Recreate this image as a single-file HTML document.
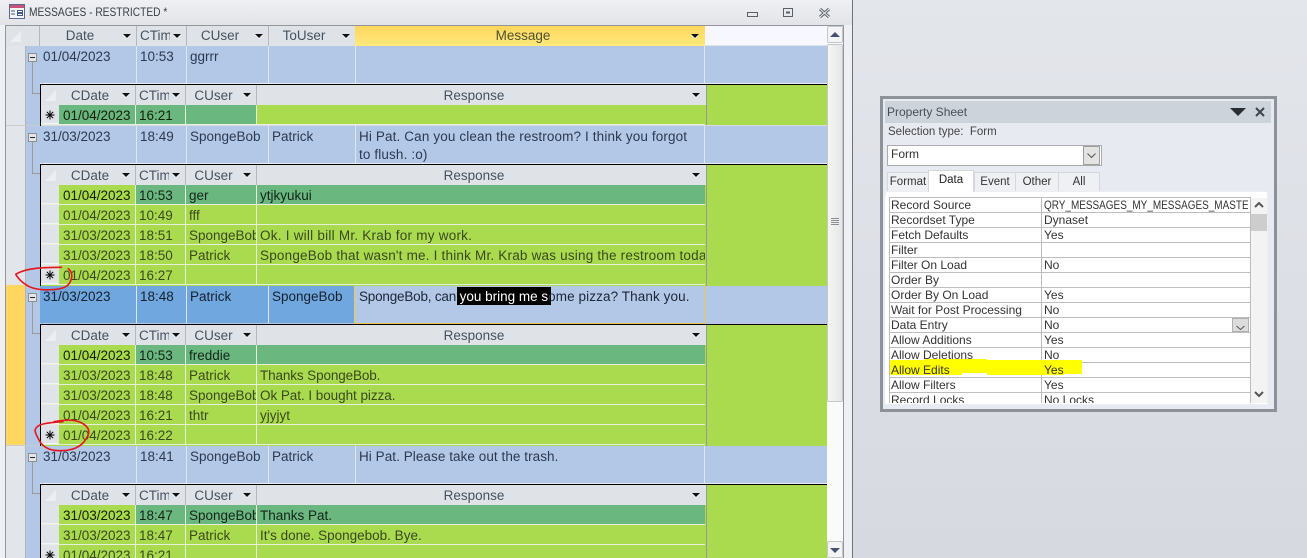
<!DOCTYPE html>
<html><head><meta charset="utf-8"><title>Messages</title>
<style>
html,body{margin:0;padding:0;width:1307px;height:558px;overflow:hidden;background:#dadde4}
body{position:relative;font-family:"Liberation Sans",sans-serif}
div{position:absolute;box-sizing:border-box}
.x{white-space:nowrap;overflow:hidden;font-size:13.5px;line-height:20px;color:#2b3a52}
.hd{background:#dfe2e7;height:20px;top:0}
.h{color:#46525f;text-align:center;top:0;height:20px}
.sb .h{line-height:22px}
.ar{width:0;height:0;border:4px solid transparent;border-top:4px solid #111;border-bottom:0;filter:drop-shadow(0 1px 0 #fff)}
.tri{width:0;height:0;border-style:solid;border-width:0 0 11px 11px;border-color:transparent transparent #eceef2 transparent}
.bc{top:0;height:37px;background:#b3c7e6;padding:0 0 0 3px;line-height:21px;border-right:1px solid #dfe6f0}
.sb{left:40px;width:787px;border-top:1px solid #000;background:#aadb4f}
.sb:before{content:"";position:absolute;left:0;top:-1px;bottom:0;width:1px;background:#000;z-index:3}
.sr{left:0;width:665px;height:20px;background:#e6eedd}
.c{top:0;height:19px;line-height:22px;padding-left:3px;background:#aadb4f;color:#39481f}
.d{padding-left:4px}
.g{background:#6ab77f;color:#14241a}
.k{color:#141f08}
.sep{top:0;width:1px;height:20px;background:#b4b8bd}
.sel{left:1px;top:0;width:18px;height:19px;background:#e0e3e8;border-bottom:1px solid #f3f4f6}
.st{position:absolute;left:4px;top:5px}
.vg{left:666px;top:0;width:1px;bottom:0;background:#999}
.bx{left:28px;width:9px;height:9px;border:1px solid #8f8f8f;background:#e4e6ea}
.bx:after{content:"";position:absolute;left:1px;top:3px;width:5px;height:1px;background:#222}
.vl{left:32px;width:1px;background:#9b9b9b}
.hl{left:32px;width:8px;height:1px;background:#9b9b9b}
.p{left:4px;width:361px;height:15px;border-bottom:1px solid #bdbdbd;font-size:12px;line-height:15px;color:#333;white-space:nowrap}
.p span{position:absolute;left:2px;top:0}
.p b{position:absolute;left:155px;top:0;font-weight:normal;width:204px;overflow:hidden}
.tab{top:172px;height:19px;background:#eef0f3;border:1px solid #d5d7db;border-bottom:0;font-size:11.5px;line-height:18px;text-align:center;color:#333}
</style></head><body>

<!-- right background -->
<div style="left:853px;top:0;width:454px;height:558px;background:linear-gradient(#e3e6eb,#d6d9e0)"></div>

<!-- window -->
<div style="left:0;top:0;width:852px;height:558px;background:#eef0f4"></div>
<div style="left:852px;top:0;width:1px;height:558px;background:#6f7479"></div>
<div style="left:0;top:0;width:852px;height:25px;background:linear-gradient(#eef0f3,#e2e4e8)"></div>
<svg style="position:absolute;left:9px;top:4px" width="16" height="15" viewBox="0 0 16 15"><rect x=".5" y=".5" width="15" height="14" fill="#f4f6fb" stroke="#5a6a8c"/><rect x="1" y="1" width="14" height="3" fill="#c8527a"/><path d="M2 7h4M2 10h4" stroke="#445a80"/><rect x="8.500" y="6.500" width="5" height="2" fill="#fff" stroke="#445a80"/><rect x="8.500" y="9.500" width="5" height="2" fill="#fff" stroke="#445a80"/></svg>
<div class="x" style="left:29px;top:2px;height:20px;font-size:12px;color:#3a3f46;transform:scaleX(.85);transform-origin:0 0">MESSAGES - RESTRICTED *</div>
<svg style="position:absolute;left:745px;top:5px" width="90" height="14" viewBox="0 0 90 14" fill="none"><rect x="2.500" y="7.500" width="10" height="4" stroke="#5a6068"/><rect x="38.500" y="3.500" width="9" height="8" stroke="#5a6068"/><rect x="41" y="6.500" width="4" height="2" fill="#5a6068"/><path d="M75 4l9 8M84 4l-9 8" stroke="#5a6068" stroke-width="3"/><path d="M75 4l9 8M84 4l-9 8" stroke="#eef0f3" stroke-width="1"/></svg>

<!-- grid frame -->
<div style="left:5px;top:25px;width:839px;height:533px;border:1px solid #92979c;border-bottom:0;background:#e0e3e8"></div>
<div style="left:6px;top:26px;width:19px;height:532px;background:#e2e5ea"></div>
<div style="left:25px;top:46px;width:15px;height:512px;background:#b3c7e6;border-left:1px solid #b0b4ba"></div>
<div style="left:6px;top:285px;width:19px;height:160px;background:#ffd65f"></div>
<div style="left:6px;top:125px;width:34px;height:1px;background:#c7ccd3"></div>
<div style="left:6px;top:445px;width:34px;height:1px;background:#c7ccd3"></div>

<!-- main header -->
<div style="left:6px;top:26px;width:821px;height:20px;background:#dfe2e7"></div>
<div class="tri" style="left:10px;top:31px"></div>
<div style="left:39px;top:26px;width:1px;height:20px;background:#b4b8bd"></div>
<div style="left:136px;top:26px;width:1px;height:20px;background:#b4b8bd"></div>
<div style="left:186px;top:26px;width:1px;height:20px;background:#b4b8bd"></div>
<div style="left:268px;top:26px;width:1px;height:20px;background:#b4b8bd"></div>
<div style="left:355px;top:26px;width:350px;height:20px;background:linear-gradient(#ffd55c,#ffe97e)"></div>
<div style="left:705px;top:26px;width:122px;height:19px;background:#f6f7ff"></div>
<div class="x h" style="left:40px;top:26px;width:80px">Date</div>
<div class="x h" style="left:140px;top:26px;width:30px;text-align:left">CTim</div>
<div class="x h" style="left:187px;top:26px;width:66px">CUser</div>
<div class="x h" style="left:269px;top:26px;width:70px">ToUser</div>
<div class="x h" style="left:356px;top:26px;width:334px;color:#4d5232">Message</div>
<div class="ar" style="left:123px;top:34px"></div>
<div class="ar" style="left:173px;top:34px"></div>
<div class="ar" style="left:255px;top:34px"></div>
<div class="ar" style="left:342px;top:34px"></div>
<div class="ar" style="left:691px;top:34px"></div>

<!-- ROW 1 -->
<div style="left:40px;top:46px;width:787px;height:38px;background:#b3c7e6"></div>
<div class="x bc" style="left:40px;top:46px;width:97px">01/04/2023</div>
<div class="x bc" style="left:137px;top:46px;width:50px">10:53</div>
<div class="x bc" style="left:187px;top:46px;width:82px">ggrrr</div>
<div class="x bc" style="left:269px;top:46px;width:87px"></div>
<div class="x bc" style="left:356px;top:46px;width:349px"></div>
<div style="left:40px;top:83px;width:787px;height:1px;background:#e6ecf4"></div>
<div class="bx" style="top:53px"></div><div class="vl" style="top:62px;height:31px"></div><div class="hl" style="top:93px"></div>

<div class="sb" style="top:84px;height:42px">
  <div class="hd" style="left:0;width:666px"></div>
  <div class="vg"></div>
  <div class="tri" style="left:5px;top:5px"></div>
  <div class="sep" style="left:95px"></div><div class="sep" style="left:145px"></div><div class="sep" style="left:216px"></div>
  <div class="x h" style="left:19px;width:76px;padding-right:14px">CDate</div><div class="x h" style="left:99px;width:30px;text-align:left">CTim</div><div class="x h" style="left:146px;width:70px;padding-right:15px">CUser</div><div class="x h" style="left:217px;width:449px;padding-right:15px">Response</div>
  <div class="ar" style="left:82px;top:8px"></div><div class="ar" style="left:132px;top:8px"></div><div class="ar" style="left:203px;top:8px"></div><div class="ar" style="left:652px;top:8px"></div>
  <div class="sr" style="top:20px;height:20px">
    <div class="sel"><svg class="st" width="10" height="10" viewBox="0 0 10 10"><path d="M5 .5v9M.5 5h9M1.800 1.800l6.400 6.400M8.200 1.800l-6.400 6.400" stroke="#000"/></svg></div>
    <div class="x c d g k" style="left:19px;width:76px">01/04/2023</div><div class="x c g k" style="left:96px;width:49px">16:21</div><div class="x c g" style="left:146px;width:70px"></div><div class="x c" style="left:217px;width:448px"></div>
  </div>
</div>
<div style="left:40px;top:125px;width:787px;height:1px;background:#d8dde3"></div>

<!-- ROW 2 -->
<div style="left:40px;top:126px;width:787px;height:38px;background:#b3c7e6"></div>
<div class="x bc" style="left:40px;top:126px;width:97px">31/03/2023</div>
<div class="x bc" style="left:137px;top:126px;width:50px">18:49</div>
<div class="x bc" style="left:187px;top:126px;width:82px">SpongeBob</div>
<div class="x bc" style="left:269px;top:126px;width:87px">Patrick</div>
<div class="x bc" style="left:356px;top:126px;width:349px;line-height:18px;padding-top:2px;letter-spacing:.13px">Hi Pat. Can you clean the restroom? I think you forgot<br>to flush. :o)</div>
<div style="left:40px;top:163px;width:787px;height:1px;background:#e6ecf4"></div>
<div class="bx" style="top:133px"></div><div class="vl" style="top:142px;height:31px"></div><div class="hl" style="top:173px"></div>

<div class="sb" style="top:164px;height:122px">
  <div class="hd" style="left:0;width:666px"></div>
  <div class="vg"></div>
  <div class="tri" style="left:5px;top:5px"></div>
  <div class="sep" style="left:95px"></div><div class="sep" style="left:145px"></div><div class="sep" style="left:216px"></div>
  <div class="x h" style="left:19px;width:76px;padding-right:14px">CDate</div><div class="x h" style="left:99px;width:30px;text-align:left">CTim</div><div class="x h" style="left:146px;width:70px;padding-right:15px">CUser</div><div class="x h" style="left:217px;width:449px;padding-right:15px">Response</div>
  <div class="ar" style="left:82px;top:8px"></div><div class="ar" style="left:132px;top:8px"></div><div class="ar" style="left:203px;top:8px"></div><div class="ar" style="left:652px;top:8px"></div>
  <div class="sr" style="top:20px"><div class="sel"></div><div class="x c d k" style="left:19px;width:76px">01/04/2023</div><div class="x c g" style="left:96px;width:49px">10:53</div><div class="x c g" style="left:146px;width:70px">ger</div><div class="x c g" style="left:217px;width:448px">ytjkyukui</div></div>
  <div class="sr" style="top:40px"><div class="sel"></div><div class="x c d" style="left:19px;width:76px">01/04/2023</div><div class="x c" style="left:96px;width:49px">10:49</div><div class="x c" style="left:146px;width:70px">fff</div><div class="x c" style="left:217px;width:448px"></div></div>
  <div class="sr" style="top:60px"><div class="sel"></div><div class="x c d" style="left:19px;width:76px">31/03/2023</div><div class="x c" style="left:96px;width:49px">18:51</div><div class="x c" style="left:146px;width:70px">SpongeBob</div><div class="x c" style="left:217px;width:448px;letter-spacing:.24px">Ok. I will bill Mr. Krab for my work.</div></div>
  <div class="sr" style="top:80px"><div class="sel"></div><div class="x c d" style="left:19px;width:76px">31/03/2023</div><div class="x c" style="left:96px;width:49px">18:50</div><div class="x c" style="left:146px;width:70px">Patrick</div><div class="x c" style="left:217px;width:448px;letter-spacing:.2px">SpongeBob that wasn't me. I think Mr. Krab was using the restroom today</div></div>
  <div class="sr" style="top:100px"><div class="sel"><svg class="st" width="10" height="10" viewBox="0 0 10 10"><path d="M5 .5v9M.5 5h9M1.800 1.800l6.400 6.400M8.200 1.800l-6.400 6.400" stroke="#000"/></svg></div><div class="x c d" style="left:19px;width:76px">01/04/2023</div><div class="x c" style="left:96px;width:49px">16:27</div><div class="x c" style="left:146px;width:70px"></div><div class="x c" style="left:217px;width:448px"></div></div>
</div>

<!-- ROW 3 -->
<div style="left:40px;top:286px;width:787px;height:38px;background:#b3c7e6"></div>
<div class="x bc" style="left:40px;top:286px;width:97px;background:#71a7df;color:#14202e">31/03/2023</div>
<div class="x bc" style="left:137px;top:286px;width:50px;background:#71a7df;color:#14202e">18:48</div>
<div class="x bc" style="left:187px;top:286px;width:82px;background:#71a7df;color:#14202e">Patrick</div>
<div class="x bc" style="left:269px;top:286px;width:86px;background:#71a7df;color:#14202e">SpongeBob</div>
<div class="bc" style="left:354px;top:286px;width:351px;height:38px;border:1px solid #f0c850;border-width:0 1px 1px 1px"></div>
<div style="left:457px;top:287px;width:94px;height:18px;background:#000"></div>
<div class="x" style="left:359px;top:286px;height:21px;line-height:21px;color:#1c2738;white-space:pre"><span style="letter-spacing:-.2px">SpongeBob, can </span><span style="color:#fff">you bring me s</span><span style="letter-spacing:.1px">ome pizza? Thank you.</span></div>
<div class="bx" style="top:293px"></div><div class="vl" style="top:302px;height:31px"></div><div class="hl" style="top:333px"></div>

<div class="sb" style="top:324px;height:122px">
  <div class="hd" style="left:0;width:666px"></div>
  <div class="vg"></div>
  <div class="tri" style="left:5px;top:5px"></div>
  <div class="sep" style="left:95px"></div><div class="sep" style="left:145px"></div><div class="sep" style="left:216px"></div>
  <div class="x h" style="left:19px;width:76px;padding-right:14px">CDate</div><div class="x h" style="left:99px;width:30px;text-align:left">CTim</div><div class="x h" style="left:146px;width:70px;padding-right:15px">CUser</div><div class="x h" style="left:217px;width:449px;padding-right:15px">Response</div>
  <div class="ar" style="left:82px;top:8px"></div><div class="ar" style="left:132px;top:8px"></div><div class="ar" style="left:203px;top:8px"></div><div class="ar" style="left:652px;top:8px"></div>
  <div class="sr" style="top:20px"><div class="sel"></div><div class="x c d k" style="left:19px;width:76px">01/04/2023</div><div class="x c g" style="left:96px;width:49px">10:53</div><div class="x c g" style="left:146px;width:70px">freddie</div><div class="x c g" style="left:217px;width:448px"></div></div>
  <div class="sr" style="top:40px"><div class="sel"></div><div class="x c d" style="left:19px;width:76px">31/03/2023</div><div class="x c" style="left:96px;width:49px">18:48</div><div class="x c" style="left:146px;width:70px">Patrick</div><div class="x c" style="left:217px;width:448px;letter-spacing:-.12px">Thanks SpongeBob.</div></div>
  <div class="sr" style="top:60px"><div class="sel"></div><div class="x c d" style="left:19px;width:76px">31/03/2023</div><div class="x c" style="left:96px;width:49px">18:48</div><div class="x c" style="left:146px;width:70px">SpongeBob</div><div class="x c" style="left:217px;width:448px;letter-spacing:-.05px">Ok Pat. I bought pizza.</div></div>
  <div class="sr" style="top:80px"><div class="sel"></div><div class="x c d" style="left:19px;width:76px">01/04/2023</div><div class="x c" style="left:96px;width:49px">16:21</div><div class="x c" style="left:146px;width:70px">thtr</div><div class="x c" style="left:217px;width:448px">yjyjyt</div></div>
  <div class="sr" style="top:100px"><div class="sel"><svg class="st" width="10" height="10" viewBox="0 0 10 10"><path d="M5 .5v9M.5 5h9M1.800 1.800l6.400 6.400M8.200 1.800l-6.400 6.400" stroke="#000"/></svg></div><div class="x c d" style="left:19px;width:76px">01/04/2023</div><div class="x c" style="left:96px;width:49px">16:22</div><div class="x c" style="left:146px;width:70px"></div><div class="x c" style="left:217px;width:448px"></div></div>
</div>

<!-- ROW 4 -->
<div style="left:40px;top:446px;width:787px;height:38px;background:#b3c7e6"></div>
<div class="x bc" style="left:40px;top:446px;width:97px">31/03/2023</div>
<div class="x bc" style="left:137px;top:446px;width:50px">18:41</div>
<div class="x bc" style="left:187px;top:446px;width:82px">SpongeBob</div>
<div class="x bc" style="left:269px;top:446px;width:87px">Patrick</div>
<div class="x bc" style="left:356px;top:446px;width:349px;letter-spacing:.06px">Hi Pat. Please take out the trash.</div>
<div style="left:40px;top:483px;width:787px;height:1px;background:#e6ecf4"></div>
<div class="bx" style="top:453px"></div><div class="vl" style="top:462px;height:31px"></div><div class="hl" style="top:493px"></div>

<div class="sb" style="top:484px;height:74px;overflow:hidden">
  <div class="hd" style="left:0;width:666px"></div>
  <div class="vg"></div>
  <div class="tri" style="left:5px;top:5px"></div>
  <div class="sep" style="left:95px"></div><div class="sep" style="left:145px"></div><div class="sep" style="left:216px"></div>
  <div class="x h" style="left:19px;width:76px;padding-right:14px">CDate</div><div class="x h" style="left:99px;width:30px;text-align:left">CTim</div><div class="x h" style="left:146px;width:70px;padding-right:15px">CUser</div><div class="x h" style="left:217px;width:449px;padding-right:15px">Response</div>
  <div class="ar" style="left:82px;top:8px"></div><div class="ar" style="left:132px;top:8px"></div><div class="ar" style="left:203px;top:8px"></div><div class="ar" style="left:652px;top:8px"></div>
  <div class="sr" style="top:20px"><div class="sel"></div><div class="x c d k" style="left:19px;width:76px">31/03/2023</div><div class="x c g" style="left:96px;width:49px">18:47</div><div class="x c g" style="left:146px;width:70px">SpongeBob</div><div class="x c g" style="left:217px;width:448px">Thanks Pat.</div></div>
  <div class="sr" style="top:40px"><div class="sel"></div><div class="x c d" style="left:19px;width:76px">31/03/2023</div><div class="x c" style="left:96px;width:49px">18:47</div><div class="x c" style="left:146px;width:70px">Patrick</div><div class="x c" style="left:217px;width:448px">It's done. Spongebob. Bye.</div></div>
  <div class="sr" style="top:60px"><div class="sel"><svg class="st" width="10" height="10" viewBox="0 0 10 10"><path d="M5 .5v9M.5 5h9M1.800 1.800l6.400 6.400M8.200 1.800l-6.400 6.400" stroke="#000"/></svg></div><div class="x c d" style="left:19px;width:76px">01/04/2023</div><div class="x c" style="left:96px;width:49px">16:21</div><div class="x c" style="left:146px;width:70px"></div><div class="x c" style="left:217px;width:448px"></div></div>
</div>

<!-- scrollbar -->
<div style="left:827px;top:26px;width:16px;height:532px;background:#fafafa"></div>
<div style="left:827px;top:26px;width:16px;height:17px;background:#f4f4f4;border:1px solid #c4c6c9;border-radius:2px"></div>
<div style="left:830px;top:32px;width:0;height:0;border:5px solid transparent;border-bottom:5px solid #47506e;border-top:0"></div>
<div style="left:827px;top:44px;width:16px;height:358px;background:linear-gradient(90deg,#f5f5f5,#e6e6e6);border:1px solid #c4c6c9;border-radius:2px"></div>
<svg style="position:absolute;left:830px;top:218px" width="10" height="8"><path d="M1 .5h8M1 2.500h8M1 4.500h8M1 6.500h8" stroke="#8a8e94"/></svg>
<div style="left:827px;top:541px;width:16px;height:17px;background:#f4f4f4;border:1px solid #c4c6c9;border-radius:2px"></div>
<div style="left:830px;top:548px;width:0;height:0;border:5px solid transparent;border-top:5px solid #47506e;border-bottom:0"></div>

<!-- red scribbles -->
<svg style="position:absolute;left:0;top:0;pointer-events:none;z-index:5" width="110" height="558" viewBox="0 0 110 558" fill="none" stroke="#e8141c" stroke-width="1.600" stroke-linecap="round" stroke-linejoin="round">
<path d="M61.500 267.300C52 267.500 44 267.600 36.500 268.300C29 269 21 271 15.700 274.300C18 278 21 281.500 25 284C30 288 36 289.500 45 289.800C54 290 63 289 67.500 285.500C71 282 72.500 277 71.500 273.500C71 271.500 70 270 68.300 268.700"/>
<path d="M54 421.700C60 420.500 67 419.800 73 420.300C78 421 83 423 86 426C88.500 428.500 89.500 431 88.500 434C87 438 85 441 82 444C78 447.500 73 449.500 67 450.300C60 451 54 450.800 49 449C44 447 41 444 39 440C37 436.500 35 433 35 430C36 427 39 425 43 424C49 422.700 56 422 63 421.700"/>
</svg>

<!-- PROPERTY SHEET -->
<div style="left:880px;top:96px;width:397px;height:316px;background:#e7eaf0;border:3px solid #8d9298"></div>
<div style="left:885px;top:101px;width:386px;height:22px;background:#ccd3db"></div>
<div class="x" style="left:887px;top:102px;font-size:12px;color:#4a4f55">Property Sheet</div>
<div style="left:1230px;top:108px;width:0;height:0;border:8px solid transparent;border-top:8px solid #2a2d31;border-bottom:0"></div>
<svg style="position:absolute;left:1255px;top:107px" width="10" height="10"><path d="M1 1l8 8M9 1l-8 8" stroke="#40454b" stroke-width="2"/></svg>
<div class="x" style="left:888px;top:122px;font-size:11.500px;color:#444;white-space:pre">Selection type:  Form</div>
<div style="left:887px;top:145px;width:215px;height:21px;background:#fff;border:1px solid #a9abae"></div>
<div class="x" style="left:891px;top:144px;font-size:12px;color:#333">Form</div>
<div style="left:1083px;top:146px;width:17px;height:19px;background:#e3e3e3;border:1px solid #9e9e9e"></div>
<svg style="position:absolute;left:1086px;top:152px" width="11" height="8" fill="none"><path d="M1.500 1.500l4 4 4-4" stroke="#555"/></svg>

<div class="tab" style="left:887px;width:42px">Format</div>
<div class="tab" style="left:974px;width:42px">Event</div>
<div class="tab" style="left:1015px;width:44px">Other</div>
<div class="tab" style="left:1058px;width:42px">All</div>
<div style="left:885px;top:191px;width:383px;height:214px;background:#fff;border:1px solid #eceef1"></div>
<div class="tab" style="left:928px;top:170px;width:46px;height:22px;background:#fff;z-index:2;color:#222">Data</div>

<div style="left:885px;top:197px;width:366px;height:206px;overflow:hidden;background:#fff">
  <div style="left:4px;top:0;width:1px;height:206px;background:#bdbdbd"></div>
  <div style="left:156px;top:0;width:1px;height:206px;background:#bdbdbd"></div>
  <div style="left:365px;top:0;width:1px;height:206px;background:#bdbdbd"></div>
  <div style="left:4px;top:0;width:361px;height:1px;background:#bdbdbd"></div>
  <div style="left:197px;top:165px;width:168px;height:1px;background:#bdbdbd"></div>
  <svg style="position:absolute;left:0;top:0" width="200" height="206"><path d="M5 163H40V162H102V163H197V177H179V178H102V176H77V178H5Z" fill="#ffff00"/></svg>
</div>
<div style="left:885px;top:197px;width:366px;height:206px;overflow:hidden">
  <div class="p" style="top:1px"><span>Record Source</span><b><i style="font-style:normal;display:inline-block;transform:scaleX(.83);transform-origin:0 0;width:300px">QRY_MESSAGES_MY_MESSAGES_MASTER</i></b></div>
  <div class="p" style="top:16px"><span>Recordset Type</span><b>Dynaset</b></div>
  <div class="p" style="top:31px"><span>Fetch Defaults</span><b>Yes</b></div>
  <div class="p" style="top:46px"><span>Filter</span><b></b></div>
  <div class="p" style="top:61px"><span>Filter On Load</span><b>No</b></div>
  <div class="p" style="top:76px"><span>Order By</span><b></b></div>
  <div class="p" style="top:91px"><span>Order By On Load</span><b>Yes</b></div>
  <div class="p" style="top:106px"><span>Wait for Post Processing</span><b>No</b></div>
  <div class="p" style="top:121px"><span>Data Entry</span><b>No</b></div>
  <div class="p" style="top:136px"><span>Allow Additions</span><b>Yes</b></div>
  <div class="p" style="top:151px;border-bottom-color:transparent"><span>Allow Deletions</span><b>No</b></div>
  <div class="p" style="top:166px"><span>Allow Edits</span><b>Yes</b></div>
  <div class="p" style="top:181px"><span>Allow Filters</span><b>Yes</b></div>
  <div class="p" style="top:196px"><span>Record Locks</span><b>No Locks</b></div>
</div>
<div style="left:1232px;top:318px;width:17px;height:14px;background:#dcdcdc;border:1px solid #b0b0b0"></div>
<svg style="position:absolute;left:1235px;top:325px" width="11" height="6" fill="none"><path d="M1.500 1l4 3.500 4-3.500" stroke="#555"/></svg>
<div style="left:1251px;top:198px;width:16px;height:205px;background:#f3f3f3"></div>
<svg style="position:absolute;left:1254px;top:201px" width="10" height="8" fill="none"><path d="M1 6l4-4 4 4" stroke="#555" stroke-width="2"/></svg>
<div style="left:1251px;top:214px;width:16px;height:17px;background:#cdcdcd"></div>
<svg style="position:absolute;left:1254px;top:390px" width="10" height="8" fill="none"><path d="M1 2l4 4 4-4" stroke="#555" stroke-width="2"/></svg>
</body></html>
